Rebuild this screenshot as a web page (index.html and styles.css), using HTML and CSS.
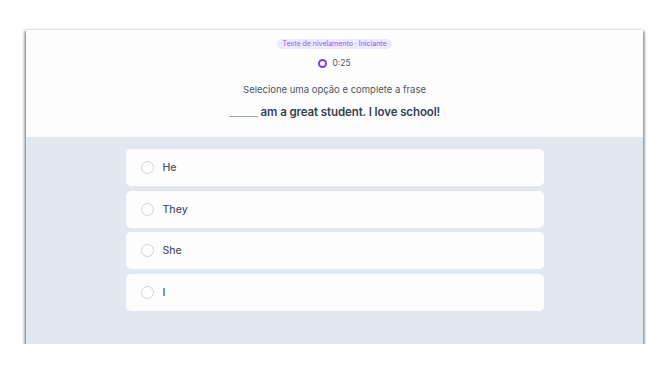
FILE: index.html
```html
<!DOCTYPE html>
<html lang="pt-BR">
<head>
    <meta charset="UTF-8">
    <meta name="viewport" content="width=device-width, initial-scale=1.0">
    <title>Teste de nivelamento</title>
    <link rel="stylesheet" href="styles.css">
</head>
<body>
    <div class="frame">
        <div class="header">
            <span class="badge">Teste de nivelamento · Iniciante</span>
            <div class="timer">
                <span class="timer-icon"></span>
                <span>0:25</span>
            </div>
            <p class="instruction">Selecione uma opção e complete a frase</p>
            <p class="sentence"><span class="blank"></span> am a great student. I love school!</p>
        </div>

        <div class="options">
            <label class="option"><span class="radio"></span>He</label>
            <label class="option"><span class="radio"></span>They</label>
            <label class="option"><span class="radio"></span>She</label>
            <label class="option"><span class="radio"></span>I</label>
        </div>
    </div>
</body>
</html>
```

FILE: styles.css
```css
body {
    font-family: Inter, "Open Sans", Arial, sans-serif;
    background-color: #ffffff;
    margin: 0;
    padding: 30px 0 0 26px;
}

.frame {
    width: 617px;
    height: 314px;
    display: flex;
    flex-direction: column;
    background-color: #e2e8f0;
    box-shadow: 0 2px 3px 1px rgba(0, 0, 0, 0.6);
}

.header {
    height: 107px;
    box-sizing: border-box;
    background-color: #fdfdfe;
    padding-top: 9px;
    display: flex;
    flex-direction: column;
    align-items: center;
}

.badge {
    height: 10px;
    line-height: 10px;
    padding: 0 5px;
    border-radius: 6px;
    background-color: #ede9fe;
    color: #8b5cf6;
    font-size: 7px;
}

.timer {
    margin-top: 9px;
    display: flex;
    align-items: center;
    gap: 5px;
    height: 10px;
    font-size: 8.5px;
    color: #4b5563;
}
.timer-icon {
    width: 5px;
    height: 5px;
    border: 2px solid #7c3aed;
    border-radius: 50%;
}

.instruction {
    margin: 16px 0 0;
    font-size: 9.5px;
    line-height: 12px;
    color: #4b5563;
}

.sentence {
    margin: 8px 0 0;
    font-size: 11.5px;
    line-height: 16px;
    font-weight: 600;
    letter-spacing: -0.1px;
    color: #374151;
}
.blank {
    display: inline-block;
    width: 29px;
    border-bottom: 1px solid #94a3b8;
    vertical-align: -1px;
}

.options {
    padding-top: 12px;
    display: flex;
    flex-direction: column;
    align-items: center;
    gap: 4.7px;
}

.option {
    width: 418px;
    height: 37px;
    box-sizing: border-box;
    padding-left: 15px;
    display: flex;
    align-items: center;
    gap: 9px;
    background-color: #fdfdfe;
    border-radius: 5px;
    font-size: 10.5px;
    font-weight: 500;
    color: #4b5563;
}

.radio {
    width: 11px;
    height: 11px;
    border: 1.5px solid #cbd5e1;
    border-radius: 50%;
}
```
